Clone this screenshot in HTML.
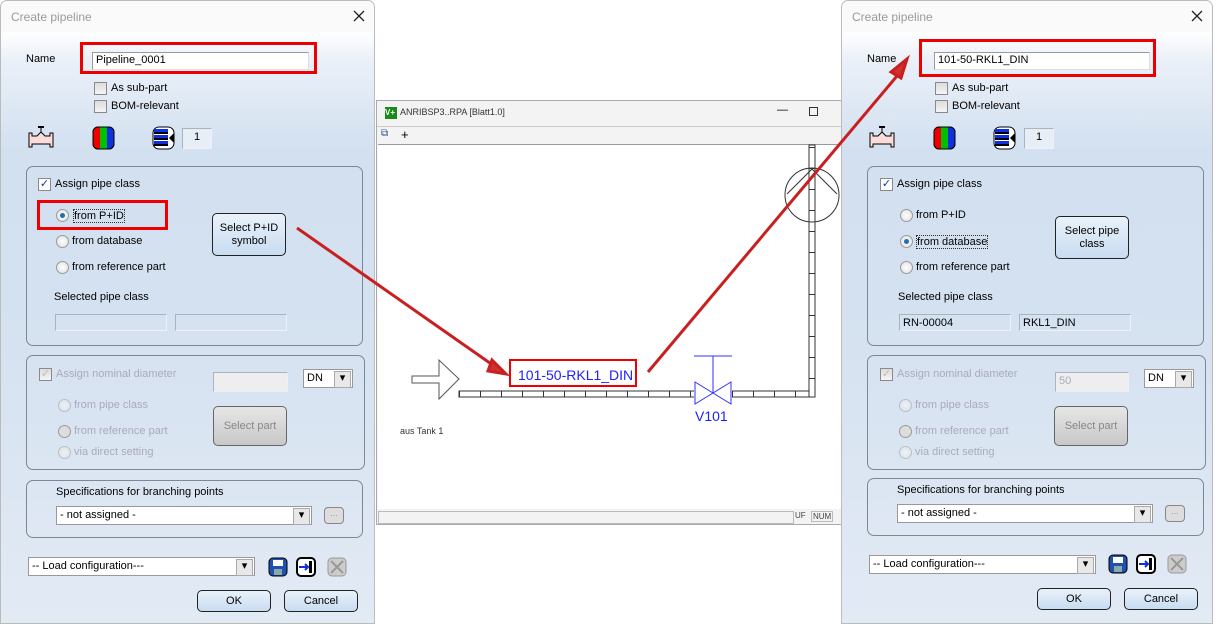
<!DOCTYPE html>
<html><head><meta charset="utf-8"><style>
*{box-sizing:border-box;margin:0;padding:0}
body{width:1217px;height:624px;position:relative;background:#fff;overflow:hidden;font-family:"Liberation Sans",sans-serif;font-size:11px;color:#000}
.a{position:absolute}
.dlg{position:absolute;top:0;width:375px;height:624px;border:1px solid #bbb;border-radius:7px 7px 0 0;overflow:hidden;background:linear-gradient(#fff 30px,#eaf0f8 60px,#d2e0f0 150px,#d4e1f0 300px,#e2eaf4 624px)}
.tb{position:absolute;left:0;top:0;width:100%;height:31px;background:#fafafa}
.tt{left:10px;top:9px;font-size:12px;color:#9a9a9a}
.inp{background:#fff;border:1px solid #9a9a9a;border-right-color:#ddd;border-bottom-color:#ddd;padding:1px 3px;font-size:11px;height:18px}
.fld{border:1px solid #a8b4c4;border-right-color:#eef;border-bottom-color:#eef;padding:2px 3px}
.cb{width:13px;height:13px;border:1px solid #8a8a8a;background:linear-gradient(#ddd,#f4f4f4)}
.red{border:3px solid #e00}
.grp{border:1px solid #7d8896;border-radius:7px}
.rd{width:13px;height:13px;border-radius:50%;border:1px solid #9a9a9a;background:radial-gradient(#fff,#ddd)}
.rd.on::after{content:"";position:absolute;left:3px;top:3px;width:5px;height:5px;border-radius:50%;background:#1f6fb0}
.dis{color:#aab}
.btn{border:1px solid #222;border-radius:5px;background:linear-gradient(#e9f2fb,#c8dcf0);text-align:center;display:flex;align-items:center;justify-content:center;line-height:13px}
.btn.dis{border-color:#666;background:linear-gradient(#e6e6e6,#c8c8c8);color:#888}
.sel{background:#fff;border:1px solid #999;padding:2px 3px;height:19px}
.sel::after{content:"▾";position:absolute;right:1px;top:1px;width:15px;height:15px;background:#e8e8e8;border:1px solid #aaa;font-size:11px;text-align:center;line-height:13px}
</style></head><body>

<!-- LEFT DIALOG -->
<div class="dlg" style="left:0">
<div class="tb"></div><div class="a tt">Create pipeline</div>
<svg class="a" style="right:9px;top:9px" width="12" height="12"><path d="M1 1l10 10M11 1L1 11" stroke="#222" stroke-width="1.3"/></svg>
<div class="a" style="left:25px;top:52px">Name</div>
<div class="a red" style="left:79px;top:41px;width:237px;height:32px"></div>
<div class="a inp" style="left:91px;top:51px;width:217px">Pipeline_0001</div>
<div class="a cb" style="left:93px;top:81px"></div><div class="a" style="left:110px;top:81px">As sub-part</div>
<div class="a cb" style="left:93px;top:99px"></div><div class="a" style="left:110px;top:99px">BOM-relevant</div>
<svg class="a" style="left:27px;top:124px" width="26" height="24"><rect x="10" y="1" width="6" height="2" fill="#000"/><line x1="13" y1="3" x2="13" y2="7" stroke="#000"/><path d="M1 8h3v3h5l4-4 4 4h5v-3h3v14h-3v-3H4v3H1z" fill="#fbdcdc" stroke="#000"/></svg>
<svg class="a" style="left:91px;top:125px" width="23" height="24"><rect x="1" y="1" width="21" height="22" rx="5" fill="#00c000" stroke="#000"/><path d="M6 1a5 5 0 0 0-5 5v12a5 5 0 0 0 5 5h2V1z" fill="#e00"/><path d="M15 1h2a5 5 0 0 1 5 5v12a5 5 0 0 1-5 5h-2z" fill="#1030e0"/><rect x="1" y="1" width="21" height="22" rx="5" fill="none" stroke="#000"/></svg>
<svg class="a" style="left:151px;top:125px" width="23" height="24"><rect x="1" y="1" width="21" height="22" rx="6" fill="#fff" stroke="#000"/><g fill="#1030e0"><rect x="2" y="3" width="14" height="3"/><rect x="2" y="9" width="14" height="3"/><rect x="2" y="15" width="14" height="3"/></g><g fill="#000"><rect x="2" y="6" width="14" height="2"/><rect x="2" y="12" width="14" height="2"/><rect x="2" y="18" width="14" height="2"/></g><path d="M22 7l-5 5 5 5z" fill="#000"/></svg>
<div class="a fld" style="left:181px;top:127px;width:30px;height:21px;text-align:center;background:#e8eef5">1</div>
<div class="a grp" style="left:25px;top:165px;width:337px;height:180px"></div>
<div class="a cb" style="left:37px;top:177px;background:#fff;color:#1530c0;font-size:11px;line-height:11px;text-align:center">✓</div><div class="a" style="left:54px;top:177px">Assign pipe class</div>
<div class="a red" style="left:36px;top:199px;width:131px;height:30px"></div>
<div class="a rd on" style="left:55px;top:208px"></div><div class="a" style="left:72px;top:208px;border:1px dotted #333">from P+ID</div>
<div class="a rd" style="left:55px;top:234px"></div><div class="a" style="left:71px;top:234px">from database</div>
<div class="a rd" style="left:55px;top:260px"></div><div class="a" style="left:71px;top:260px">from reference part</div>
<div class="a btn" style="left:211px;top:212px;width:74px;height:43px">Select P+ID<br>symbol</div>
<div class="a" style="left:53px;top:290px">Selected pipe class</div>
<div class="a fld" style="left:54px;top:313px;width:112px;height:17px"></div>
<div class="a fld" style="left:174px;top:313px;width:112px;height:17px"></div>
<div class="a grp" style="left:25px;top:354px;width:339px;height:115px"></div>
<div class="a cb" style="left:38px;top:367px;color:#bbb;font-size:11px;line-height:11px;text-align:center">✓</div><div class="a dis" style="left:55px;top:367px">Assign nominal diameter</div>
<div class="a fld" style="left:212px;top:371px;width:75px;height:20px;background:#eee"></div>
<div class="a sel" style="left:302px;top:368px;width:50px">DN</div>
<div class="a rd" style="left:57px;top:398px;opacity:.5"></div><div class="a dis" style="left:73px;top:398px">from pipe class</div>
<div class="a rd" style="left:57px;top:424px;background:#ddd"></div><div class="a dis" style="left:73px;top:424px">from reference part</div>
<div class="a rd" style="left:57px;top:445px;opacity:.5"></div><div class="a dis" style="left:73px;top:445px">via direct setting</div>
<div class="a btn dis" style="left:212px;top:405px;width:74px;height:40px">Select part</div>
<div class="a grp" style="left:25px;top:479px;width:337px;height:58px"></div>
<div class="a" style="left:55px;top:485px">Specifications for branching points</div>
<div class="a sel" style="left:55px;top:505px;width:256px">- not assigned  -</div>
<div class="a" style="left:323px;top:506px;width:20px;height:17px;border:1px solid #888;border-radius:4px;background:#ddd;color:#999;font-size:9px;text-align:center">...</div>
<div class="a sel" style="left:27px;top:556px;width:227px">-- Load configuration---</div>
<svg class="a" style="left:267px;top:556px" width="20" height="20"><rect x="1" y="1" width="18" height="18" rx="4" fill="#2050b0" stroke="#000"/><rect x="5" y="3" width="10" height="6" fill="#fff"/><rect x="6" y="12" width="8" height="6" fill="#8aa"/></svg>
<svg class="a" style="left:295px;top:556px" width="20" height="20"><rect x="1" y="1" width="18" height="18" rx="4" fill="#fff" stroke="#000" stroke-width="2"/><path d="M3 10h9M9 7l3 3-3 3" stroke="#1030e0" stroke-width="2" fill="none"/><rect x="13" y="4" width="3" height="12" fill="#000"/></svg>
<svg class="a" style="left:326px;top:556px" width="20" height="20"><rect x="1" y="1" width="18" height="18" rx="4" fill="#ccc" stroke="#999"/><path d="M4 4l12 12M16 4L4 16" stroke="#999" stroke-width="2"/></svg>
<div class="a btn" style="left:196px;top:589px;width:74px;height:22px">OK</div>
<div class="a btn" style="left:283px;top:589px;width:74px;height:22px">Cancel</div>
</div>

<!-- MIDDLE WINDOW -->
<div class="a" style="left:376px;top:100px;width:466px;height:425px;border:1px solid #aaa;background:#f3f3f3">
<div class="a" style="left:8px;top:6px;width:12px;height:12px;background:#1a8a1a;color:#fff;font-size:8px;font-weight:bold;line-height:12px">V+</div>
<div class="a" style="left:23px;top:6px;font-size:9px;color:#333">ANRIBSP3..RPA [Blatt1.0]</div>
<div class="a" style="left:400px;top:3px;font-size:11px">—</div>
<div class="a" style="left:432px;top:6px;width:9px;height:9px;border:1px solid #333"></div>
<div class="a" style="left:0;top:25px;width:466px;height:1px;background:#ccc"></div>
<div class="a" style="left:4px;top:27px;font-size:10px;color:#3050a0">⧉</div>
<div class="a" style="left:24px;top:26px;font-size:13px">+</div>
<div class="a" style="left:1px;top:43px;width:463px;height:365px;background:#fff;border-top:1px solid #999"></div>
<div class="a" style="left:1px;top:410px;width:416px;height:13px;border:1px solid #bbb"></div>
<div class="a" style="left:418px;top:410px;font-size:8px;color:#444">UF</div>
<div class="a" style="left:434px;top:410px;font-size:8px;color:#444;border:1px solid #bbb;padding:0 1px">NUM</div>
</div>

<!-- RIGHT DIALOG -->
<div class="dlg" style="left:841px;width:372px">
<div class="tb"></div><div class="a tt">Create pipeline</div>
<svg class="a" style="right:9px;top:9px" width="12" height="12"><path d="M1 1l10 10M11 1L1 11" stroke="#222" stroke-width="1.3"/></svg>
<div class="a" style="left:25px;top:52px">Name</div>
<div class="a red" style="left:77px;top:38px;width:237px;height:38px"></div>
<div class="a inp" style="left:92px;top:51px;width:216px">101-50-RKL1_DIN</div>
<div class="a cb" style="left:93px;top:81px"></div><div class="a" style="left:110px;top:81px">As sub-part</div>
<div class="a cb" style="left:93px;top:99px"></div><div class="a" style="left:110px;top:99px">BOM-relevant</div>
<svg class="a" style="left:27px;top:124px" width="26" height="24"><rect x="10" y="1" width="6" height="2" fill="#000"/><line x1="13" y1="3" x2="13" y2="7" stroke="#000"/><path d="M1 8h3v3h5l4-4 4 4h5v-3h3v14h-3v-3H4v3H1z" fill="#fbdcdc" stroke="#000"/></svg>
<svg class="a" style="left:91px;top:125px" width="23" height="24"><rect x="1" y="1" width="21" height="22" rx="5" fill="#00c000" stroke="#000"/><path d="M6 1a5 5 0 0 0-5 5v12a5 5 0 0 0 5 5h2V1z" fill="#e00"/><path d="M15 1h2a5 5 0 0 1 5 5v12a5 5 0 0 1-5 5h-2z" fill="#1030e0"/><rect x="1" y="1" width="21" height="22" rx="5" fill="none" stroke="#000"/></svg>
<svg class="a" style="left:151px;top:125px" width="23" height="24"><rect x="1" y="1" width="21" height="22" rx="6" fill="#fff" stroke="#000"/><g fill="#1030e0"><rect x="2" y="3" width="14" height="3"/><rect x="2" y="9" width="14" height="3"/><rect x="2" y="15" width="14" height="3"/></g><g fill="#000"><rect x="2" y="6" width="14" height="2"/><rect x="2" y="12" width="14" height="2"/><rect x="2" y="18" width="14" height="2"/></g><path d="M22 7l-5 5 5 5z" fill="#000"/></svg>
<div class="a fld" style="left:182px;top:127px;width:30px;height:21px;text-align:center;background:#e8eef5">1</div>
<div class="a grp" style="left:25px;top:165px;width:337px;height:180px"></div>
<div class="a cb" style="left:38px;top:177px;background:#fff;color:#1530c0;font-size:11px;line-height:11px;text-align:center">✓</div><div class="a" style="left:55px;top:177px">Assign pipe class</div>
<div class="a rd" style="left:58px;top:208px"></div><div class="a" style="left:74px;top:208px">from P+ID</div>
<div class="a rd on" style="left:58px;top:234px"></div><div class="a" style="left:74px;top:234px;border:1px dotted #333">from database</div>
<div class="a rd" style="left:58px;top:260px"></div><div class="a" style="left:74px;top:260px">from reference part</div>
<div class="a btn" style="left:213px;top:215px;width:74px;height:43px">Select pipe<br>class</div>
<div class="a" style="left:56px;top:290px">Selected pipe class</div>
<div class="a fld" style="left:57px;top:313px;width:112px;height:17px">RN-00004</div>
<div class="a fld" style="left:177px;top:313px;width:112px;height:17px">RKL1_DIN</div>
<div class="a grp" style="left:25px;top:354px;width:339px;height:115px"></div>
<div class="a cb" style="left:38px;top:367px;color:#bbb;font-size:11px;line-height:11px;text-align:center">✓</div><div class="a dis" style="left:55px;top:367px">Assign nominal diameter</div>
<div class="a fld dis" style="left:213px;top:371px;width:74px;height:20px;background:#eee">50</div>
<div class="a sel" style="left:302px;top:368px;width:50px">DN</div>
<div class="a rd" style="left:57px;top:398px;opacity:.5"></div><div class="a dis" style="left:73px;top:398px">from pipe class</div>
<div class="a rd" style="left:57px;top:424px;background:#ddd"></div><div class="a dis" style="left:73px;top:424px">from reference part</div>
<div class="a rd" style="left:57px;top:445px;opacity:.5"></div><div class="a dis" style="left:73px;top:445px">via direct setting</div>
<div class="a btn dis" style="left:212px;top:405px;width:74px;height:40px">Select part</div>
<div class="a grp" style="left:25px;top:477px;width:337px;height:58px"></div>
<div class="a" style="left:55px;top:483px">Specifications for branching points</div>
<div class="a sel" style="left:55px;top:503px;width:256px">- not assigned  -</div>
<div class="a" style="left:323px;top:504px;width:20px;height:17px;border:1px solid #888;border-radius:4px;background:#ddd;color:#999;font-size:9px;text-align:center">...</div>
<div class="a sel" style="left:27px;top:554px;width:227px">-- Load configuration---</div>
<svg class="a" style="left:266px;top:553px" width="20" height="20"><rect x="1" y="1" width="18" height="18" rx="4" fill="#2050b0" stroke="#000"/><rect x="5" y="3" width="10" height="6" fill="#fff"/><rect x="6" y="12" width="8" height="6" fill="#8aa"/></svg>
<svg class="a" style="left:294px;top:553px" width="20" height="20"><rect x="1" y="1" width="18" height="18" rx="4" fill="#fff" stroke="#000" stroke-width="2"/><path d="M3 10h9M9 7l3 3-3 3" stroke="#1030e0" stroke-width="2" fill="none"/><rect x="13" y="4" width="3" height="12" fill="#000"/></svg>
<svg class="a" style="left:325px;top:553px" width="20" height="20"><rect x="1" y="1" width="18" height="18" rx="4" fill="#ccc" stroke="#999"/><path d="M4 4l12 12M16 4L4 16" stroke="#999" stroke-width="2"/></svg>
<div class="a btn" style="left:195px;top:587px;width:74px;height:22px">OK</div>
<div class="a btn" style="left:282px;top:587px;width:74px;height:22px">Cancel</div>
</div>

<svg class="a" style="left:0;top:0" width="1217" height="624">
<defs><pattern id="pp" width="21" height="6" patternUnits="userSpaceOnUse" x="459"><rect width="21" height="6" fill="#fff"/><line x1="0.5" y1="0" x2="0.5" y2="6" stroke="#333"/></pattern>
<pattern id="pv" width="6" height="21" patternUnits="userSpaceOnUse"><rect width="6" height="21" fill="#fff"/><line x1="0" y1="0.5" x2="6" y2="0.5" stroke="#333"/></pattern></defs>
<rect x="459" y="391" width="352" height="6" fill="url(#pp)" stroke="#333"/>
<rect x="809" y="145" width="6" height="252" fill="url(#pv)" stroke="#333"/>
<path d="M412 376h27v-16l20 19-20 20v-16h-27z" fill="#fff" stroke="#555"/>
<text x="400" y="434" font-size="9" fill="#333" font-family="Liberation Sans">aus Tank 1</text>
<circle cx="812" cy="195" r="27" fill="none" stroke="#333"/>
<path d="M787 194l25-25 25 25" fill="none" stroke="#333"/>
<rect x="694" y="381" width="38" height="24" fill="#fff"/>
<path d="M695 382l36 22v-22l-36 22z" fill="#fff" stroke="#3030ff"/>
<path d="M713 356v37M694 356h38" stroke="#3030ff"/>
<text x="695" y="421" font-size="14" fill="#2020ff" font-family="Liberation Sans">V101</text>
<rect x="510" y="360" width="126" height="26" fill="#fff" stroke="#e00" stroke-width="2"/>
<text x="518" y="380" font-size="14" fill="#2020ff" font-family="Liberation Sans">101-50-RKL1_DIN</text>
<g stroke="#c82020" stroke-width="3" fill="#d03030">
<line x1="297" y1="228" x2="497" y2="368"/><path d="M492 360l14 14-18 -3z"/>
<line x1="648" y1="372" x2="897" y2="76"/><path d="M891 72l16-13-6 19z"/>
</g>
</svg>
</body></html>
